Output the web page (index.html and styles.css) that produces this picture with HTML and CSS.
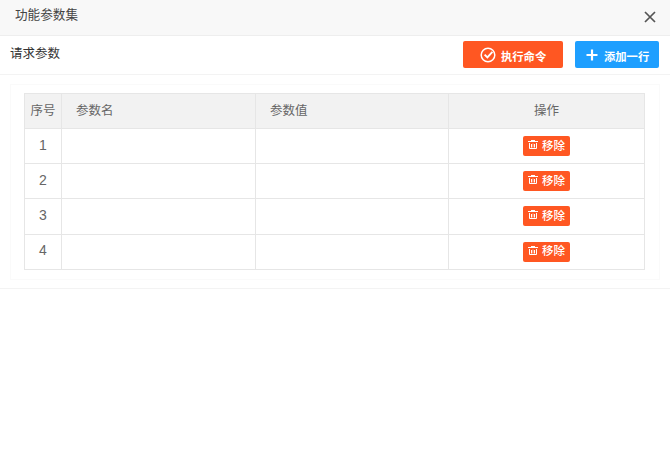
FILE: index.html
```html
<!DOCTYPE html>
<html lang="zh-CN">
<head>
  <meta charset="UTF-8">
  <title>功能参数集</title>
  <link rel="stylesheet" href="styles.css">
</head>
<body>
  <div class="header">
    <span class="title">功能参数集</span>
    <svg class="close" width="12" height="12" viewBox="0 0 12 12"><path d="M1 1L11 11M11 1L1 11" stroke="#555" stroke-width="1.7" fill="none"/></svg>
  </div>

  <div class="toolbar">
    <span class="toolbar-label">请求参数</span>
    <div class="toolbar-btns">
      <button class="btn btn-exec">
        <svg width="16" height="16" viewBox="0 0 16 16"><circle cx="8" cy="8" r="6.8" stroke="#fff" stroke-width="1.5" fill="none"/><path d="M4.6 7.6L7.4 10.4L12.4 4.8" stroke="#fff" stroke-width="1.9" fill="none"/></svg>
        执行命令
      </button>
      <button class="btn btn-add">
        <svg width="12" height="12" viewBox="0 0 12 12"><path d="M6 0.5V11.5M0.5 6H11.5" stroke="#fff" stroke-width="2.2" fill="none"/></svg>
        添加一行
      </button>
    </div>
  </div>

  <div class="panel">
    <div class="card">
      <table class="param-table">
        <thead>
          <tr>
            <th class="col-no">序号</th>
            <th class="col-name">参数名</th>
            <th class="col-value">参数值</th>
            <th class="col-op">操作</th>
          </tr>
        </thead>
        <tbody>
          <tr>
            <td class="col-no">1</td><td></td><td></td>
            <td class="col-op"><button class="btn-remove"><svg width="10" height="9" viewBox="0 0 10 9"><path d="M0 1.5H10M3 0.5H7M1.5 3V8.5H8.5V3M3.5 4V7.5M6.5 4V7.5" stroke="#fff" stroke-width="1" fill="none"/><path d="M4.5 3.5H5.5V7.5H4.5Z" fill="#ffb9a3"/></svg>移除</button></td>
          </tr>
          <tr>
            <td class="col-no">2</td><td></td><td></td>
            <td class="col-op"><button class="btn-remove"><svg width="10" height="9" viewBox="0 0 10 9"><path d="M0 1.5H10M3 0.5H7M1.5 3V8.5H8.5V3M3.5 4V7.5M6.5 4V7.5" stroke="#fff" stroke-width="1" fill="none"/><path d="M4.5 3.5H5.5V7.5H4.5Z" fill="#ffb9a3"/></svg>移除</button></td>
          </tr>
          <tr>
            <td class="col-no">3</td><td></td><td></td>
            <td class="col-op"><button class="btn-remove"><svg width="10" height="9" viewBox="0 0 10 9"><path d="M0 1.5H10M3 0.5H7M1.5 3V8.5H8.5V3M3.5 4V7.5M6.5 4V7.5" stroke="#fff" stroke-width="1" fill="none"/><path d="M4.5 3.5H5.5V7.5H4.5Z" fill="#ffb9a3"/></svg>移除</button></td>
          </tr>
          <tr>
            <td class="col-no">4</td><td></td><td></td>
            <td class="col-op"><button class="btn-remove"><svg width="10" height="9" viewBox="0 0 10 9"><path d="M0 1.5H10M3 0.5H7M1.5 3V8.5H8.5V3M3.5 4V7.5M6.5 4V7.5" stroke="#fff" stroke-width="1" fill="none"/><path d="M4.5 3.5H5.5V7.5H4.5Z" fill="#ffb9a3"/></svg>移除</button></td>
          </tr>
        </tbody>
      </table>
    </div>
  </div>
</body>
</html>
```

FILE: styles.css
```css
* {
  margin: 0;
  padding: 0;
  box-sizing: border-box;
  font-family: "Liberation Sans", "Noto Sans CJK SC", sans-serif;
}
body {
  background: #fff;
  color: #333;
  font-size: 12.5px;
}
.header {
  height: 36px;
  background: #f8f8f8;
  border-bottom: 1px solid #eee;
  display: flex;
  justify-content: space-between;
  align-items: center;
  padding: 0 14px 8px 15px;
}
.title {
  font-size: 12.6px;
  color: #444;
}
.close {
  margin-top: 7px;
}
.toolbar {
  height: 39px;
  border-bottom: 1px solid #f3f3f3;
  display: flex;
  justify-content: space-between;
  align-items: flex-start;
  padding: 5px 11px 0 10px;
}
.toolbar-label {
  font-size: 12.5px;
  color: #333;
  line-height: 26px;
}
.toolbar-btns {
  display: flex;
  gap: 12px;
}
.btn {
  height: 27px;
  border: none;
  border-radius: 2px;
  color: #fff;
  font-size: 11.3px;
  font-weight: bold;
  display: flex;
  align-items: center;
  padding-top: 2px;
}
.btn svg {
  margin-bottom: 2px;
}
.btn-exec {
  width: 100px;
  background: #ff5722;
  padding-left: 17px;
  gap: 5px;
}
.btn-add {
  width: 84px;
  background: #1e9fff;
  padding-left: 11px;
  gap: 6px;
}
.panel {
  padding: 9px 10px;
  height: 214px;
  border-bottom: 1px solid #f3f3f3;
}
.card {
  height: 196px;
  border: 1px solid #fafafa;
  padding: 8px 14px 0 13px;
}
.param-table {
  width: 621px;
  border-collapse: collapse;
  table-layout: fixed;
  color: #666;
  font-size: 12.5px;
}
.param-table th, .param-table td {
  border: 1px solid #e6e6e6;
  height: 35.15px;
  font-weight: normal;
}
.param-table td.col-no {
  font-size: 14px;
}
.param-table th {
  background: #f2f2f2;
  text-align: left;
  padding: 0 0 3px 14px;
}
.param-table th.col-no, .param-table td.col-no {
  width: 37px;
  padding: 0 0 3px 0;
  text-align: center;
}
.param-table th.col-name {
  width: 194px;
}
.param-table th.col-value {
  width: 193px;
}
.param-table th.col-op {
  text-align: center;
  padding: 0 0 3px 0;
}
.param-table td.col-op {
  text-align: center;
  padding: 0;
}
.btn-remove {
  width: 47px;
  height: 20px;
  background: #ff5722;
  color: #fff;
  border: none;
  border-radius: 2px;
  font-size: 11.5px;
  font-weight: 500;
  display: inline-flex;
  align-items: center;
  justify-content: center;
  gap: 4px;
  padding-bottom: 3px;
  vertical-align: middle;
}
```
